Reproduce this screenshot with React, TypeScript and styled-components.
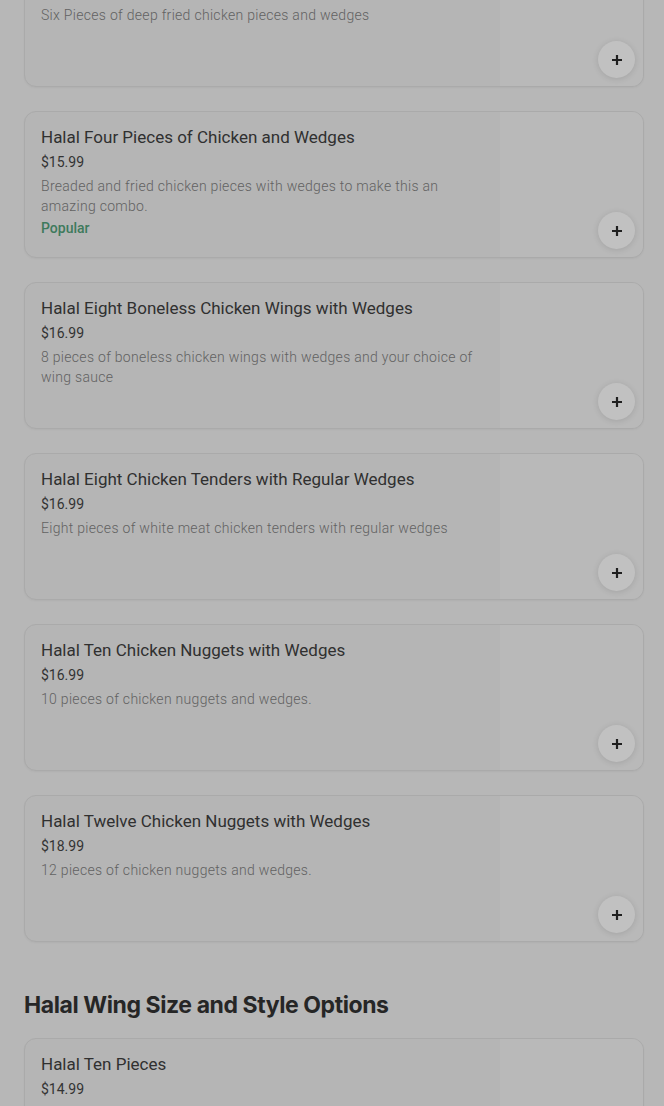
import React from 'react';
import styled, { createGlobalStyle } from 'styled-components';

type MenuItem = {
  title: string;
  price: string;
  description: string;
  popular?: boolean;
};

type Section = {
  heading?: string;
  items: MenuItem[];
};

const sections: Section[] = [
  {
    items: [
      {
        title: 'Halal Six Pieces of Chicken and Wedges',
        price: '$19.99',
        description: 'Six Pieces of deep fried chicken pieces and wedges'
      },
      {
        title: 'Halal Four Pieces of Chicken and Wedges',
        price: '$15.99',
        description:
          'Breaded and fried chicken pieces with wedges to make this an amazing combo.',
        popular: true
      },
      {
        title: 'Halal Eight Boneless Chicken Wings with Wedges',
        price: '$16.99',
        description:
          '8 pieces of boneless chicken wings with wedges and your choice of wing sauce'
      },
      {
        title: 'Halal Eight Chicken Tenders with Regular Wedges',
        price: '$16.99',
        description: 'Eight pieces of white meat chicken tenders with regular wedges'
      },
      {
        title: 'Halal Ten Chicken Nuggets with Wedges',
        price: '$16.99',
        description: '10 pieces of chicken nuggets and wedges.'
      },
      {
        title: 'Halal Twelve Chicken Nuggets with Wedges',
        price: '$18.99',
        description: '12 pieces of chicken nuggets and wedges.'
      }
    ]
  },
  {
    heading: 'Halal Wing Size and Style Options',
    items: [
      {
        title: 'Halal Ten Pieces',
        price: '$14.99',
        description: 'Ten pieces of chicken wings with your choice of sauce.'
      }
    ]
  }
];

function PlusIcon() {
  return (
    <svg width="12" height="12" viewBox="0 0 12 12" aria-hidden>
      <path d="M6 1v10M1 6h10" stroke="#1f1f1f" strokeWidth="2.2" />
    </svg>
  );
}

function ItemCard({ item }: { item: MenuItem }) {
  return (
    <Card>
      <Info>
        <Title>{item.title}</Title>
        <Price>{item.price}</Price>
        <Desc>{item.description}</Desc>
        {item.popular && <Popular>Popular</Popular>}
      </Info>
      <Thumb />
      <AddButton aria-label="Add">
        <PlusIcon />
      </AddButton>
    </Card>
  );
}

export default function App() {
  return (
    <>
      <GlobalStyle />
      <Page>
        {sections.map((s, i) => (
          <SectionBlock key={i}>
            {s.heading && <Heading>{s.heading}</Heading>}
            <List>
              {s.items.map((it) => (
                <ItemCard key={it.title} item={it} />
              ))}
            </List>
          </SectionBlock>
        ))}
      </Page>
    </>
  );
}

const GlobalStyle = createGlobalStyle`
  html, body {
    margin: 0;
    padding: 0;
    background: #b7b7b7;
    overflow: hidden;
  }
  body {
    font-family: Roboto, "Noto Sans", sans-serif;
  }
`;

const Page = styled.div`
  margin-top: -60px;
  padding: 0 20px 0 24px;
  display: flex;
  flex-direction: column;
  gap: 48px;
`;

const SectionBlock = styled.section`
  display: flex;
  flex-direction: column;
`;

const Heading = styled.h2`
  margin: 0 0 18px;
  font-family: Inter, Roboto, sans-serif;
  font-size: 23px;
  line-height: 30px;
  font-weight: 700;
  letter-spacing: -0.42px;
  color: #262626;
`;

const List = styled.div`
  display: flex;
  flex-direction: column;
  gap: 24px;
`;

const Card = styled.div`
  position: relative;
  display: flex;
  height: 147px;
  box-sizing: border-box;
  border: 1px solid #aaaaaa;
  border-radius: 12px;
  background: #b5b5b5;
  overflow: hidden;
  box-shadow: 0 1px 2px rgba(0, 0, 0, 0.04);
`;

const Info = styled.div`
  flex: 1;
  min-width: 0;
  padding: 14px 24px 0 16px;
  display: flex;
  flex-direction: column;
`;

const Title = styled.div`
  font-size: 17px;
  line-height: 22px;
  font-weight: 400;
  color: #303030;
  margin-bottom: 4px;
`;

const Price = styled.div`
  font-size: 14px;
  line-height: 20px;
  font-weight: 400;
  color: #333333;
  margin-bottom: 4px;
`;

const Desc = styled.div`
  font-size: 14px;
  line-height: 20px;
  font-weight: 300;
  letter-spacing: 0.3px;
  color: #626262;
  max-width: 440px;
`;

const Popular = styled.div`
  margin-top: 2px;
  font-size: 14px;
  line-height: 20px;
  font-weight: 500;
  color: #3e7a5c;
`;

const Thumb = styled.div`
  width: 143px;
  flex-shrink: 0;
  background: #b9b9b9;
`;

const AddButton = styled.button`
  position: absolute;
  right: 8px;
  bottom: 8px;
  width: 37px;
  height: 37px;
  border: none;
  border-radius: 50%;
  padding: 0;
  background: #c1c1c1;
  box-shadow: 0 1px 6px rgba(0, 0, 0, 0.12);
  display: flex;
  align-items: center;
  justify-content: center;
`;
